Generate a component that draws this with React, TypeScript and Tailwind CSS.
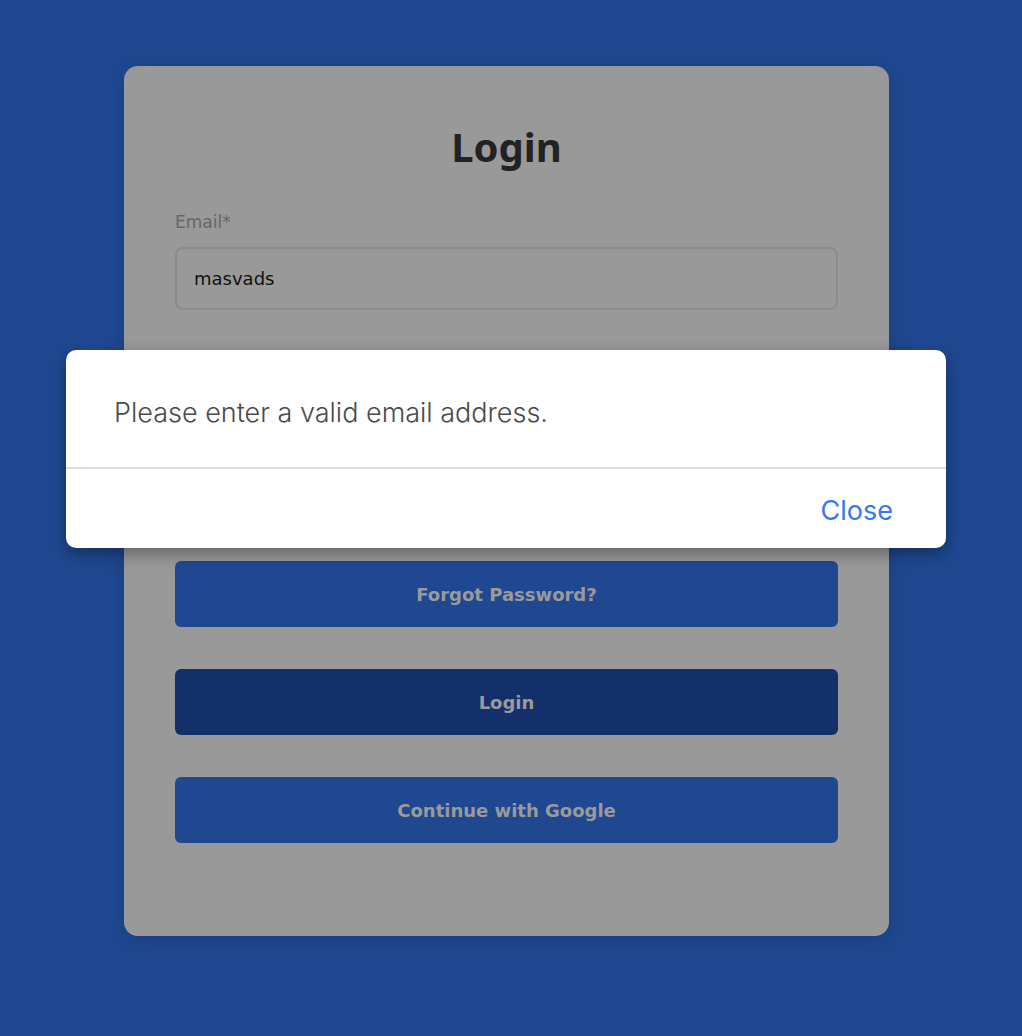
export default function App() {
  const dv = { fontFamily: "'DejaVu Sans', 'Noto Sans', sans-serif" };
  return (
    <div className="relative min-h-[1036px] w-full bg-[#1f4891]">
      <div className="flex justify-center pt-[66px] pr-[9px]">
        <div className="flex h-[870px] w-[765px] flex-col rounded-[14px] bg-[#999999] px-[51px] pt-[57px] shadow-[0_4px_20px_rgba(0,0,0,0.15)]">
          <h1 className="text-center text-[40px] font-bold leading-[48px] text-[#222222]" style={{ fontFamily: "'Noto Sans', sans-serif" }}>
            Login
          </h1>
          <label className="mt-[39px] text-[17px] leading-[24px] text-[#666666]" style={dv}>
            Email*
          </label>
          <div className="mt-[13px] flex h-[63px] items-center rounded-[8px] border-2 border-[#8c8c8c] px-[17px] text-[18px] text-[#111111]" style={dv}>
            masvads
          </div>
          <label className="mt-[50px] text-[17px] leading-[24px] text-[#666666]" style={dv}>
            Password*
          </label>
          <div className="mt-[13px] h-[63px] rounded-[8px] border-2 border-[#8c8c8c]" />
          <div className="h-[101px]" />
          <div className="flex flex-col gap-[42px]" style={dv}>
            <button className="h-[66px] rounded-[6px] bg-[#1f4891] text-[18px] font-semibold text-[#9a9a9a]">
              Forgot Password?
            </button>
            <button className="h-[66px] rounded-[6px] bg-[#14306a] text-[18px] font-semibold text-[#9a9a9a]">
              Login
            </button>
            <button className="h-[66px] rounded-[6px] bg-[#1f4891] text-[18px] font-semibold text-[#9a9a9a]">
              Continue with Google
            </button>
          </div>
        </div>
      </div>
      <div className="absolute left-[66px] top-[350px] w-[880px] overflow-hidden rounded-[10px] bg-white shadow-[0_6px_16px_rgba(0,0,0,0.35)]" style={{ fontFamily: "Inter, Roboto, sans-serif" }}>
        <div className="flex h-[119px] items-center border-b-2 border-[#dcdcdc] px-[48px] pt-[10px] text-[27px] font-light text-[#4a4a4a]">
          Please enter a valid email address.
        </div>
        <div className="flex h-[79px] items-center justify-end px-[53px] pt-[6px]">
          <button className="text-[27px] text-[#3478f6]">Close</button>
        </div>
      </div>
    </div>
  );
}
